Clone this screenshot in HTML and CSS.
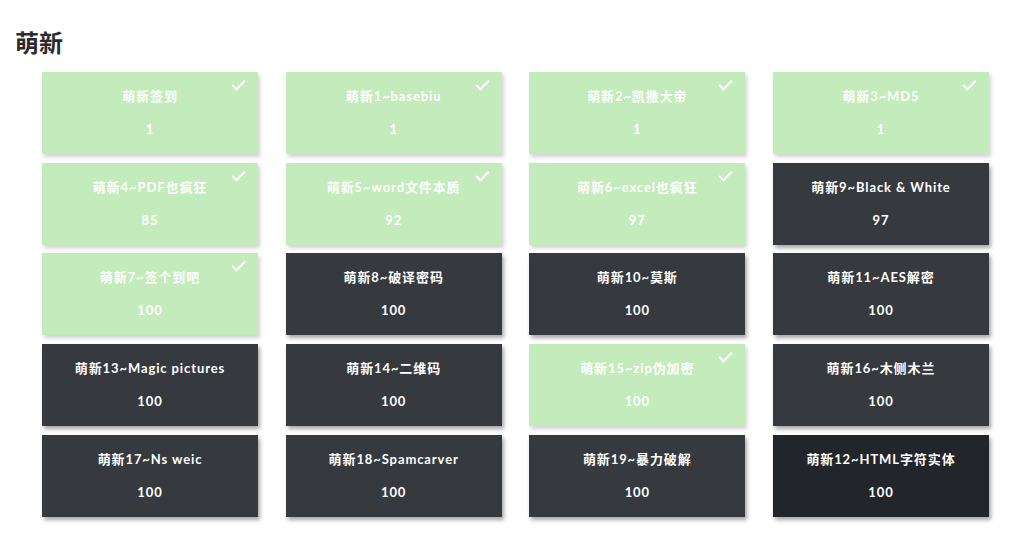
FILE: index.html
```html
<!DOCTYPE html>
<html lang="zh">
<head>
<meta charset="utf-8">
<link rel="stylesheet" href="styles.css">
</head>
<body>
<h1 class="page-title">萌新</h1>
<div class="grid">
  <div class="card solved"><div class="name">萌新签到</div><div class="score">1</div></div>
  <div class="card solved"><div class="name">萌新1~basebiu</div><div class="score">1</div></div>
  <div class="card solved"><div class="name">萌新2~凯撒大帝</div><div class="score">1</div></div>
  <div class="card solved"><div class="name">萌新3~MD5</div><div class="score">1</div></div>

  <div class="card solved"><div class="name">萌新4~PDF也疯狂</div><div class="score">85</div></div>
  <div class="card solved"><div class="name">萌新5~word文件本质</div><div class="score">92</div></div>
  <div class="card solved"><div class="name">萌新6~excel也疯狂</div><div class="score">97</div></div>
  <div class="card"><div class="name">萌新9~Black &amp; White</div><div class="score">97</div></div>

  <div class="card solved"><div class="name">萌新7~签个到吧</div><div class="score">100</div></div>
  <div class="card"><div class="name">萌新8~破译密码</div><div class="score">100</div></div>
  <div class="card"><div class="name">萌新10~莫斯</div><div class="score">100</div></div>
  <div class="card"><div class="name">萌新11~AES解密</div><div class="score">100</div></div>

  <div class="card"><div class="name">萌新13~Magic pictures</div><div class="score">100</div></div>
  <div class="card"><div class="name">萌新14~二维码</div><div class="score">100</div></div>
  <div class="card solved"><div class="name">萌新15~zip伪加密</div><div class="score">100</div></div>
  <div class="card"><div class="name">萌新16~木侧木兰</div><div class="score">100</div></div>

  <div class="card"><div class="name">萌新17~Ns weic</div><div class="score">100</div></div>
  <div class="card"><div class="name">萌新18~Spamcarver</div><div class="score">100</div></div>
  <div class="card"><div class="name">萌新19~暴力破解</div><div class="score">100</div></div>
  <div class="card hover"><div class="name">萌新12~HTML字符实体</div><div class="score">100</div></div>
</div>
</body>
</html>
```
FILE: styles.css
```css
html, body {
  margin: 0;
  padding: 0;
  background: #ffffff;
}
body {
  font-family: "Lato", "Noto Sans CJK SC", sans-serif;
  width: 1024px;
  height: 550px;
  overflow: hidden;
}
.page-title {
  margin: 0;
  padding: 27px 0 0 15px;
  height: 45px;
  box-sizing: border-box;
  font-size: 24px;
  line-height: 30px;
  font-weight: 700;
  color: #2b2b2b;
  font-family: "Noto Sans CJK SC", sans-serif;
}
.grid {
  display: grid;
  grid-template-columns: repeat(4, 216px);
  column-gap: 27.67px;
  row-gap: 8.7px;
  padding-left: 42px;
  margin-top: 27px;
}
.card {
  position: relative;
  height: 82px;
  background: #363a3f;
  color: #ffffff;
  text-align: center;
  font-weight: 700;
  font-size: 13px;
  letter-spacing: 0.9px;
  box-shadow: 2px 3px 4px rgba(0, 0, 0, 0.35);
  box-sizing: border-box;
  padding-top: 15px;
}
.card .name {
  line-height: 18px;
}
.card .score {
  margin-top: 15px;
  line-height: 18px;
}
.card.solved {
  background: #c3ebbb;
  box-shadow: 2px 3px 4px rgba(0, 0, 0, 0.18);
}
.card.solved::after {
  content: "";
  position: absolute;
  top: 8px;
  right: 13px;
  width: 11px;
  height: 5px;
  border-left: 2.5px solid #ffffff;
  border-bottom: 2.5px solid #ffffff;
  transform: rotate(-45deg);
}
.card.hover {
  background: #22252a;
}
```
